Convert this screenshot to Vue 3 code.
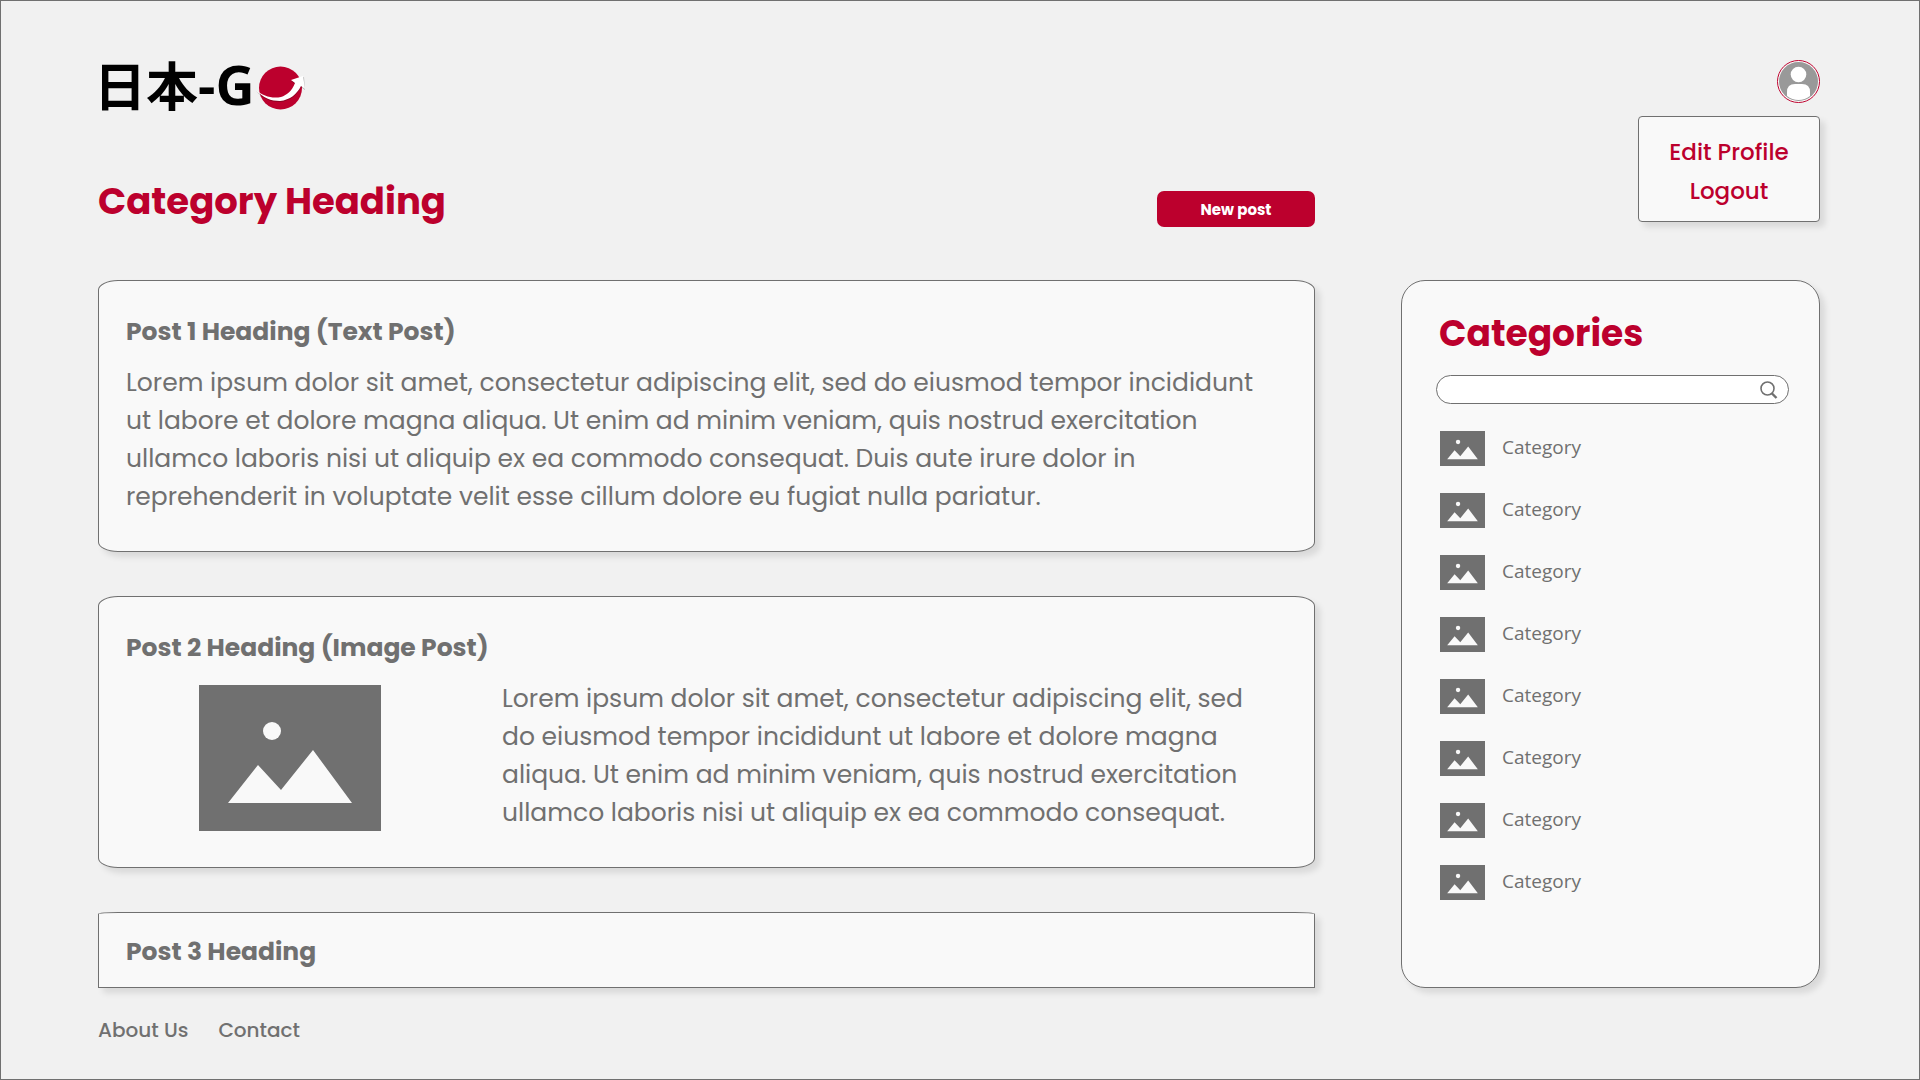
<script setup>
const posts = [
  {
    title: 'Post 1 Heading (Text Post)',
    body: [
      'Lorem ipsum dolor sit amet, consectetur adipiscing elit, sed do eiusmod tempor incididunt',
      'ut labore et dolore magna aliqua. Ut enim ad minim veniam, quis nostrud exercitation',
      'ullamco laboris nisi ut aliquip ex ea commodo consequat. Duis aute irure dolor in',
      'reprehenderit in voluptate velit esse cillum dolore eu fugiat nulla pariatur.'
    ].join('\n')
  },
  {
    title: 'Post 2 Heading (Image Post)',
    image: true,
    body: [
      'Lorem ipsum dolor sit amet, consectetur adipiscing elit, sed',
      'do eiusmod tempor incididunt ut labore et dolore magna',
      'aliqua. Ut enim ad minim veniam, quis nostrud exercitation',
      'ullamco laboris nisi ut aliquip ex ea commodo consequat.'
    ].join('\n')
  },
  { title: 'Post 3 Heading', clipped: true }
]
const categories = Array.from({ length: 8 }, () => 'Category')
</script>

<template>
  <div class="page">
    <header class="top">
      <a href="#" class="logo" aria-label="日本-GO">
        <span class="kanji">日本</span><span class="latin">-G</span>
        <svg class="ball" viewBox="0 0 52 44" aria-hidden="true">
          <circle cx="25.5" cy="22" r="21.5" fill="#bc002d" />
          <path d="M1 25C8 33 16 36 25 36C35 35 42 29 46 21L50 24L49 11L36 15L40 18C37 26 32 30 26 32C17 34 8 31 1 25Z" fill="#000" opacity="0.25" />
          <path d="M1 24C8 32 16 35 25 35C35 34 42 28 46 20L50 23L48 10L36 14L40 17C37 25 32 29 26 31C17 33 8 30 1 24Z" fill="#fff" />
        </svg>
      </a>
      <div class="account">
        <button class="avatar" type="button" aria-label="Account">
          <svg viewBox="0 0 43 43" aria-hidden="true">
            <circle cx="21.5" cy="21.5" r="21" fill="#fff" stroke="#bc002d" />
            <circle cx="21.5" cy="21.5" r="19.5" fill="#999" />
            <circle cx="21.5" cy="14.5" r="7.8" fill="#fff" />
            <path d="M10 36V32Q10 24 18 24H25Q33 24 33 32V36Q28 40 21.5 40T10 36Z" fill="#fff" />
          </svg>
        </button>
        <nav class="menu">
          <a href="#">Edit Profile</a>
          <a href="#">Logout</a>
        </nav>
      </div>
    </header>

    <main class="columns">
      <section class="feed">
        <div class="feed-head">
          <h1>Category Heading</h1>
          <button class="new-post" type="button">New post</button>
        </div>
        <article v-for="post in posts" :key="post.title" class="card" :class="{ clipped: post.clipped }">
          <h2>{{ post.title }}</h2>
          <div v-if="post.body" class="content">
            <div v-if="post.image" class="media">
              <svg class="picture" viewBox="0 0 182 146" preserveAspectRatio="none" aria-hidden="true">
                <rect width="182" height="146" fill="#707070" />
                <circle cx="73" cy="46" r="9" fill="#f9f9f9" />
                <path d="M29 118L59 80L82 105L114 65L153 118Z" fill="#f9f9f9" />
              </svg>
            </div>
            <p>{{ post.body }}</p>
          </div>
        </article>
      </section>

      <aside class="sidebar">
        <h2>Categories</h2>
        <div class="search">
          <input type="search" aria-label="Search categories" />
          <svg viewBox="0 0 18 18" aria-hidden="true">
            <circle cx="7.5" cy="7.5" r="6.5" fill="none" stroke="#707070" stroke-width="1.6" />
            <path d="M11.5 12L16.5 17" stroke="#707070" stroke-width="2.4" />
          </svg>
        </div>
        <ul>
          <li v-for="(name, i) in categories" :key="i">
            <a href="#">
              <svg class="thumb" viewBox="0 0 182 146" preserveAspectRatio="none" aria-hidden="true">
                <rect width="182" height="146" fill="#707070" />
                <circle cx="73" cy="46" r="9" fill="#f9f9f9" />
                <path d="M29 118L59 80L82 105L114 65L153 118Z" fill="#f9f9f9" />
              </svg>
              <span>{{ name }}</span>
            </a>
          </li>
        </ul>
      </aside>
    </main>

    <footer class="foot">
      <a href="#">About Us</a>
      <a href="#">Contact</a>
    </footer>
  </div>
</template>

<style>
body {
  margin: 0;
  background: #f1f1f1;
}
</style>

<style scoped>
.page {
  box-sizing: border-box;
  min-height: 100vh;
  padding: 59px 99px 0 97px;
  border: 1px solid #707070;
  background: #f1f1f1;
  color: #707070;
  font-family: Poppins, Inter, sans-serif;
}
a {
  color: inherit;
  text-decoration: none;
}
h1,
h2,
p,
ul {
  margin: 0;
  padding: 0;
}
.top {
  display: flex;
  justify-content: space-between;
  align-items: flex-start;
  height: 100px;
}
.logo {
  display: flex;
  align-items: center;
  height: 48px;
  margin-left: -4px;
  color: #000;
  line-height: 48px;
}
.kanji {
  font-family: "Noto Sans CJK JP", sans-serif;
  font-size: 52px;
  font-weight: 700;
}
.latin {
  font-family: "Open Sans", sans-serif;
  font-size: 54px;
  font-weight: 700;
}
.ball {
  width: 52px;
  height: 44px;
  margin-top: 8px;
}
.account {
  position: relative;
}
.avatar {
  display: block;
  width: 43px;
  height: 43px;
  padding: 0;
  border: 0;
  background: none;
}
.avatar svg {
  display: block;
}
.menu {
  position: absolute;
  top: 56px;
  right: 0;
  box-sizing: border-box;
  width: 182px;
  padding: 16px 0 10px;
  border: 1px solid #707070;
  border-radius: 4px;
  background: #f9f9f9;
  box-shadow: 5px 5px 6px rgba(0, 0, 0, 0.1);
  color: #bc002d;
  font-size: 23px;
  font-weight: 500;
  line-height: 39px;
  text-align: center;
}
.menu a {
  display: block;
}
.columns {
  display: grid;
  grid-template-columns: minmax(0, 1fr) 419px;
  column-gap: 86px;
}
.feed {
  display: flex;
  flex-direction: column;
  gap: 44px;
}
.feed-head {
  display: flex;
  justify-content: space-between;
  align-items: center;
  height: 76px;
}
h1,
.sidebar h2 {
  color: #bc002d;
  font-size: 37px;
  font-weight: 700;
  line-height: 48px;
}
h1 {
  margin-top: 5px;
}
.new-post {
  width: 158px;
  height: 36px;
  margin-top: 22px;
  padding: 2px 0 0;
  border: 0;
  border-radius: 7px;
  background: #bc002d;
  color: #fff;
  font: 700 15px/34px Poppins, Inter, sans-serif;
}
.card {
  box-sizing: border-box;
  min-height: 272px;
  padding: 31px 27px 28px;
  border: 1px solid #707070;
  border-radius: 20px / 10px;
  background: #f9f9f9;
  box-shadow: 5px 5px 6px rgba(0, 0, 0, 0.1);
}
.card h2 {
  font-size: 25px;
  font-weight: 700;
  line-height: 40px;
}
.card.clipped {
  min-height: 76px;
  padding: 19px 27px 15px;
  border-radius: 20px 20px 0 0 / 2px 2px 0 0;
}
.content {
  display: flex;
  padding-top: 12px;
}
.content p {
  font-size: 25px;
  line-height: 38px;
  white-space: pre-line;
}
.media {
  display: flex;
  flex: none;
  justify-content: center;
  width: 376px;
}
.picture {
  width: 182px;
  height: 146px;
  margin: 5px 48px 0 0;
}
.sidebar {
  box-sizing: border-box;
  margin-top: 120px;
  padding: 29px 30px 56px 34px;
  border: 1px solid #707070;
  border-radius: 24px;
  background: #f9f9f9;
  box-shadow: 5px 5px 6px rgba(0, 0, 0, 0.1);
}
.sidebar h2 {
  padding-left: 3px;
  font-size: 36px;
}
.search {
  display: flex;
  align-items: center;
  box-sizing: border-box;
  height: 29px;
  margin-top: 17px;
  padding: 0 10px 0 14px;
  border: 1px solid #707070;
  border-radius: 15px;
  background: #fff;
}
.search input {
  flex: 1;
  min-width: 0;
  padding: 0;
  border: 0;
  outline: 0;
  background: none;
  appearance: none;
  color: inherit;
  font: 16px/24px Poppins, Inter, sans-serif;
}
.search svg {
  width: 18px;
  height: 18px;
}
.sidebar ul {
  display: flex;
  flex-direction: column;
  gap: 27px;
  padding: 27px 4px 0;
  list-style: none;
}
.sidebar li a {
  display: flex;
  gap: 17px;
  height: 35px;
  font-family: "Open Sans", sans-serif;
  font-size: 19px;
  line-height: 32px;
}
.thumb {
  width: 45px;
  height: 35px;
}
.foot {
  display: flex;
  gap: 30px;
  padding-top: 27px;
  font-size: 20px;
  font-weight: 500;
  line-height: 30px;
}
</style>
